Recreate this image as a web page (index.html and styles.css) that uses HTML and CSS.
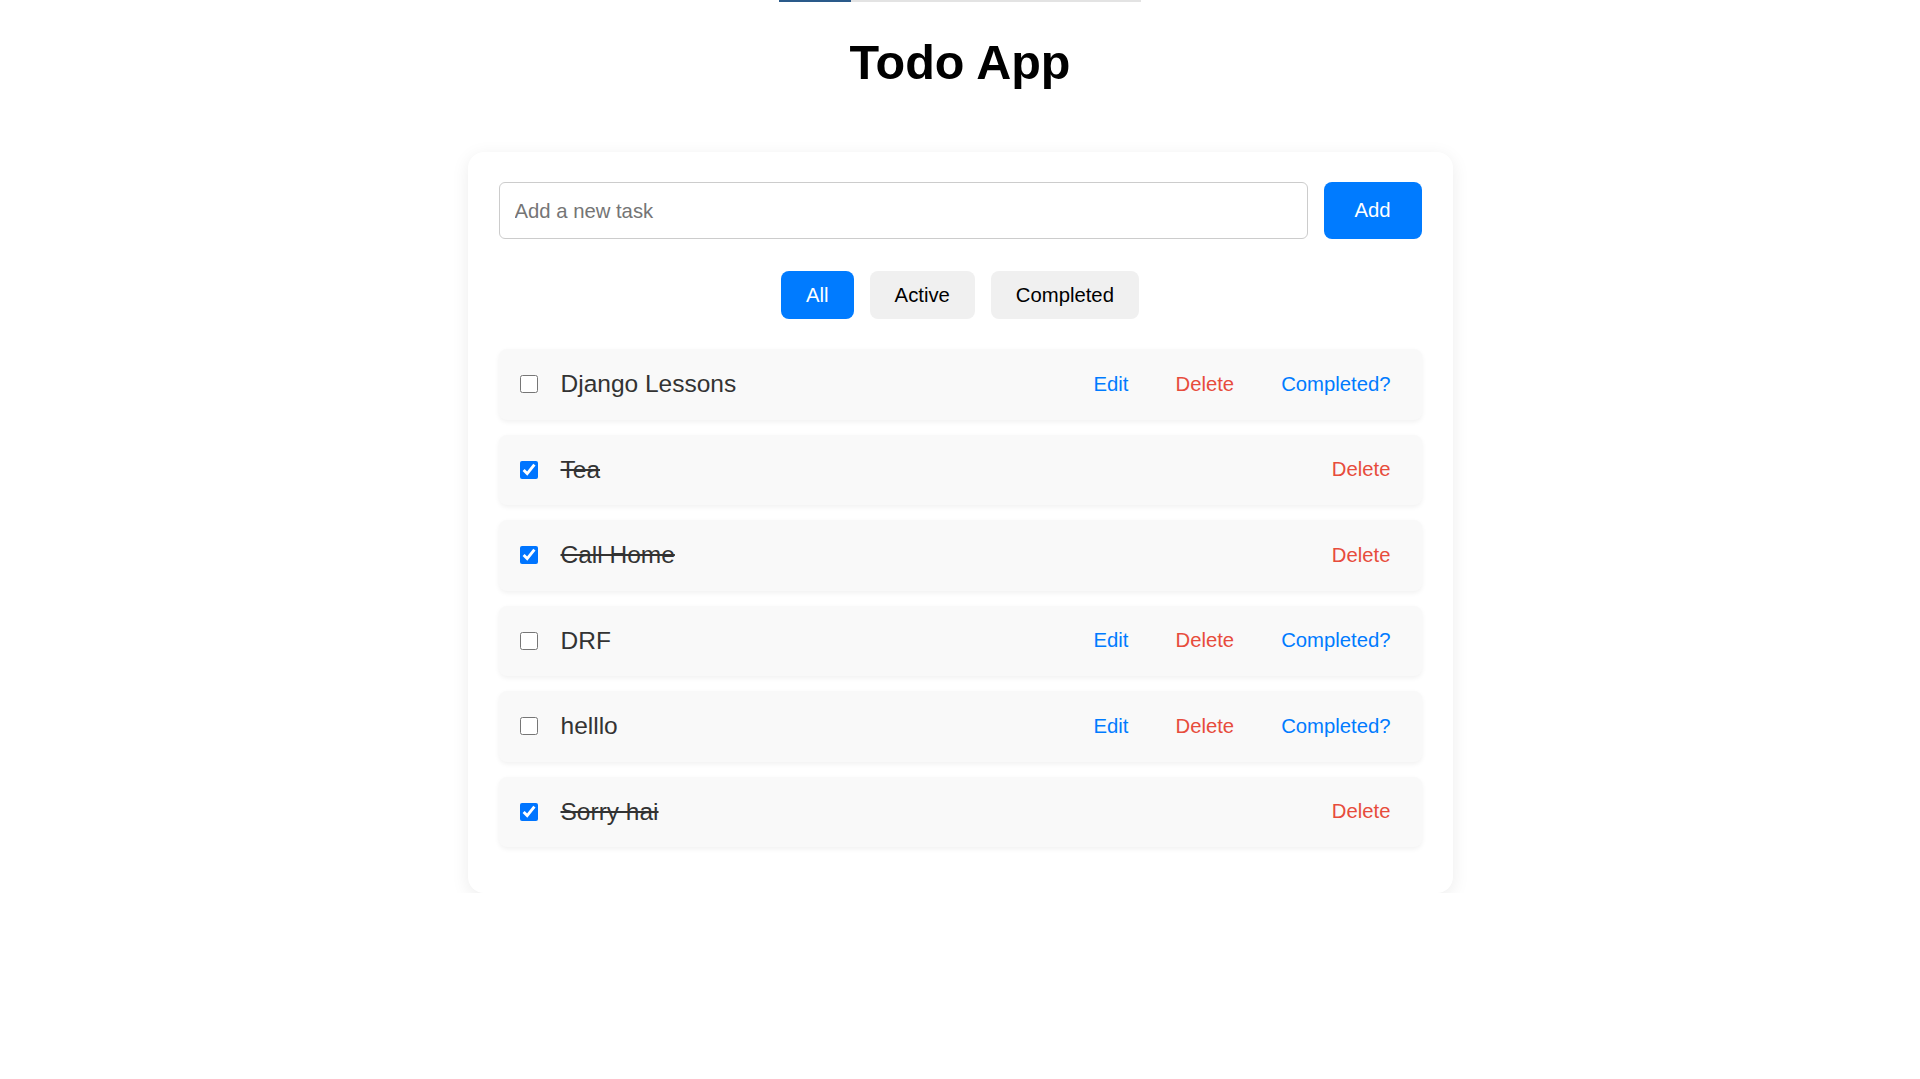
FILE: index.html
```html
<!DOCTYPE html>
<html lang="en">
<head>
<meta charset="utf-8">
<title>Todo App</title>
<link rel="stylesheet" href="styles.css">
</head>
<body>
<div class="topbar"><div class="topbar-fill"></div></div>
<h1 class="title">Todo App</h1>
<main class="card">
  <form class="add-row">
    <input class="add-input" type="text" placeholder="Add a new task">
    <button class="add-btn" type="button">Add</button>
  </form>
  <div class="filters">
    <button class="filter active-filter" type="button">All</button>
    <button class="filter" type="button">Active</button>
    <button class="filter" type="button">Completed</button>
  </div>
  <ul class="list">
    <li class="item">
      <input class="check" type="checkbox">
      <span class="text">Django Lessons</span>
      <div class="actions">
        <button class="act edit" type="button">Edit</button>
        <button class="act del" type="button">Delete</button>
        <button class="act done" type="button">Completed?</button>
      </div>
    </li>
    <li class="item">
      <input class="check" type="checkbox" checked>
      <span class="text struck">Tea</span>
      <div class="actions">
        <button class="act del" type="button">Delete</button>
      </div>
    </li>
    <li class="item">
      <input class="check" type="checkbox" checked>
      <span class="text struck">Call Home</span>
      <div class="actions">
        <button class="act del" type="button">Delete</button>
      </div>
    </li>
    <li class="item">
      <input class="check" type="checkbox">
      <span class="text">DRF</span>
      <div class="actions">
        <button class="act edit" type="button">Edit</button>
        <button class="act del" type="button">Delete</button>
        <button class="act done" type="button">Completed?</button>
      </div>
    </li>
    <li class="item">
      <input class="check" type="checkbox">
      <span class="text">helllo</span>
      <div class="actions">
        <button class="act edit" type="button">Edit</button>
        <button class="act del" type="button">Delete</button>
        <button class="act done" type="button">Completed?</button>
      </div>
    </li>
    <li class="item">
      <input class="check" type="checkbox" checked>
      <span class="text struck">Sorry hai</span>
      <div class="actions">
        <button class="act del" type="button">Delete</button>
      </div>
    </li>
  </ul>
</main>
</body>
</html>
```

FILE: styles.css
```css
* { box-sizing: border-box; }

body {
  margin: 0;
  background: #ffffff;
  font-family: "Liberation Sans", Arial, sans-serif;
  color: #333;
}

.topbar {
  width: 362px;
  height: 2px;
  margin: 0 auto;
  background: #e3e3e3;
}
.topbar-fill {
  width: 72px;
  height: 2px;
  background: #2a5a8a;
}

.title {
  margin: 33px 0 0;
  text-align: center;
  font-size: 48.5px;
  font-weight: bold;
  color: #000;
  line-height: 54px;
}

.card {
  width: 985px;
  margin: 63px auto 0;
  padding: 30px 31px 31px;
  background: #fff;
  border-radius: 16px;
  box-shadow: 0 4px 18px rgba(0, 0, 0, 0.08);
}

.add-row {
  display: flex;
  gap: 16px;
  margin: 0;
}
.add-input {
  flex: 1;
  height: 57px;
  padding: 1px 15px 0;
  border: 1px solid #cccccc;
  border-radius: 6px;
  font-family: "Liberation Sans", Arial, sans-serif;
  font-size: 20.3px;
  color: #333;
  outline: none;
}
.add-input::placeholder { color: #757575; }
.add-btn {
  width: 98px;
  height: 57px;
  border: none;
  border-radius: 8px;
  background: #007bff;
  color: #fff;
  font-family: "Liberation Sans", Arial, sans-serif;
  font-size: 20.3px;
  cursor: pointer;
}

.filters {
  display: flex;
  justify-content: center;
  gap: 16px;
  margin: 32px 0 30px;
}
.filter {
  height: 48px;
  padding: 1px 25px 0;
  border: none;
  border-radius: 8px;
  background: #f0f0f0;
  color: #000;
  font-family: "Liberation Sans", Arial, sans-serif;
  font-size: 20.3px;
  cursor: pointer;
}
.filter.active-filter {
  background: #007bff;
  color: #fff;
}

.list {
  list-style: none;
  margin: 0;
  padding: 0;
}
.item {
  display: flex;
  align-items: center;
  height: 70.5px;
  margin-bottom: 15px;
  padding: 0 19px 0 21px;
  background: #f9f9f9;
  border-radius: 8px;
  box-shadow: 0 2px 5px rgba(0, 0, 0, 0.06);
}
.check {
  width: 18px;
  height: 18px;
  margin: 0 23px 0 0;
  flex: none;
}
.text {
  flex: 1;
  font-size: 24.5px;
  color: #333;
}
.text.struck {
  text-decoration: line-through;
}
.actions {
  display: flex;
  gap: 23px;
}
.act {
  padding: 6px 12px;
  border: none;
  background: transparent;
  font-family: "Liberation Sans", Arial, sans-serif;
  font-size: 20.3px;
  cursor: pointer;
}
.act.edit, .act.done { color: #007bff; }
.act.del { color: #e74c3c; }
```
